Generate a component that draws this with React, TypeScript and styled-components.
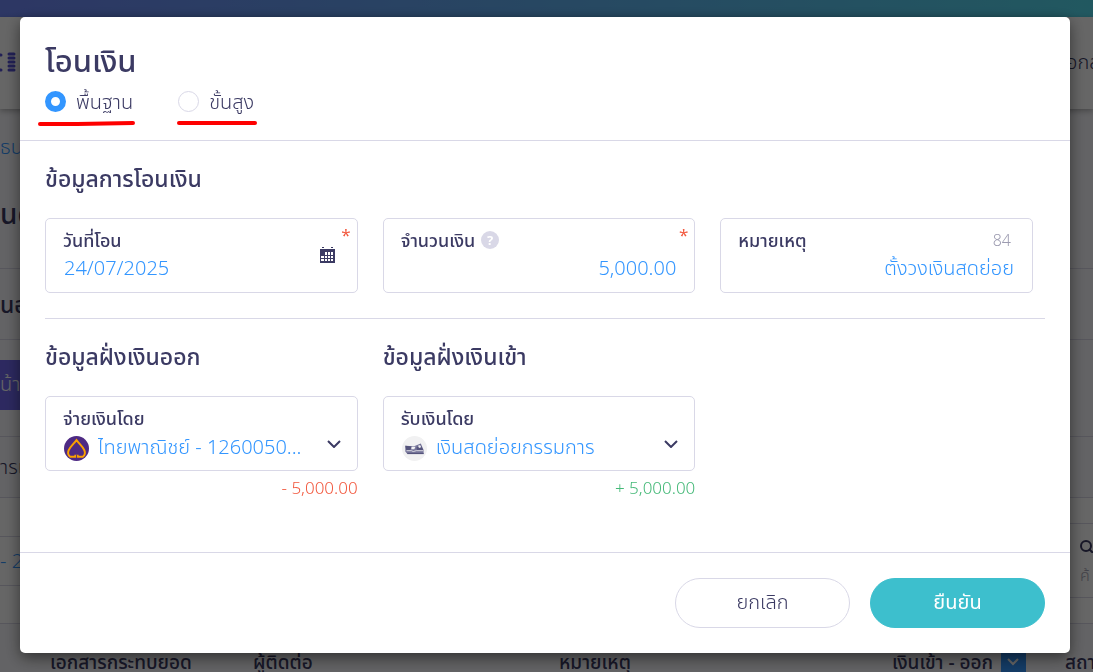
import React from 'react';
import styled, { createGlobalStyle } from 'styled-components';

const ink = '#3b3a63';
const blue = '#3396ff';
const line = '#d9d8e7';

const GlobalStyle = createGlobalStyle`
  * { box-sizing: border-box; }
  html, body { margin: 0; height: 100%; overflow: hidden; }
  body, button, input, select {
    font-family: 'Noto Sans', 'Noto Sans Thai', 'Noto Sans Thai Looped', 'Open Sans', sans-serif;
    color: ${ink};
  }
`;

/* Page behind the dialog */
const Page = styled.div`
  min-height: 100vh;
  background: #f8f8fc;
`;
const TopBar = styled.div`
  height: 17px;
  background: linear-gradient(90deg, #7189fb, #54dcf0);
`;
const Header = styled.header`
  position: relative;
  display: flex;
  align-items: center;
  justify-content: space-between;
  height: 92px;
  background: #fff;
  box-shadow: 0 2px 6px rgba(0, 0, 0, 0.3);
`;
const NavLink = styled.a`
  width: 27px;
  font-size: 20px;
  font-weight: 300;
  white-space: nowrap;
  color: ${ink};
  text-decoration: none;
`;
const Intro = styled.div`
  display: flex;
  flex-direction: column;
  gap: 27px;
  height: 160px;
  padding-top: 24px;
  border-bottom: 1px solid ${line};
`;
const Crumb = styled.a`
  font-size: 20px;
  font-weight: 300;
  line-height: 28px;
  color: ${blue};
  text-decoration: none;
`;
const PageTitle = styled.h2`
  margin: 0;
  font-size: 28px;
  font-weight: 500;
  line-height: 50px;
`;
const TabRow = styled.div`
  height: 71px;
  font-size: 23px;
  font-weight: 500;
  line-height: 70px;
  border-bottom: 1px solid ${line};
`;
const ActionRow = styled.div`
  height: 97px;
  padding-top: 20px;
  border-bottom: 1px solid ${line};
`;
const PageButton = styled.button`
  display: block;
  width: 140px;
  height: 50px;
  padding: 0;
  border: 0;
  background: #7068f0;
  color: #fff;
  font-size: 20px;
  font-weight: 300;
  text-align: left;
`;
const TabLabel = styled.div`
  height: 61px;
  font-size: 20px;
  font-weight: 300;
  line-height: 60px;
  border-bottom: 1px solid ${line};
`;
const Filters = styled.div`
  display: flex;
  align-items: center;
  justify-content: space-between;
  height: 126px;
  background: #fff;
  border-bottom: 1px solid ${line};
`;
const FilterBox = styled.div`
  width: 200px;
  height: 50px;
  font-size: 20px;
  font-weight: 300;
  line-height: 48px;
  color: ${blue};
  border: solid ${line};
  border-width: 1px 0;
`;
const SearchBox = styled.div`
  display: flex;
  flex-direction: column;
  gap: 10px;
  width: 28px;
  height: 75px;
  padding: 15px 0 0 15px;
  margin-left: auto;
  color: #a9a9b8;
  font-size: 16px;
  font-weight: 300;
  line-height: 24px;
  border: solid ${line};
  border-width: 1px 0;
`;
const HeadRow = styled.div`
  display: grid;
  grid-template-columns: 203px 306px 333px minmax(0, 1fr) 28px;
  padding: 19px 0 0 50px;
  font-size: 19px;
  font-weight: 500;
  line-height: 38px;
  white-space: nowrap;
  overflow: hidden;
`;
const SortCell = styled.div`
  display: flex;
  align-items: center;
  gap: 8px;
`;
const SortButton = styled.button`
  display: grid;
  place-items: center;
  width: 25px;
  height: 25px;
  padding: 0;
  border: 0;
  background: ${blue};
  color: #fff;
`;

/* Dialog */
const Overlay = styled.div`
  position: fixed;
  inset: 0;
  padding: 17px 23px 19px 20px;
  background: rgba(0, 0, 0, 0.6);
`;
const Dialog = styled.form`
  position: relative;
  background: #fff;
  border-radius: 5px;
  box-shadow: 0 5px 15px rgba(0, 0, 0, 0.5);
`;
const DialogHead = styled.div`
  height: 124px;
  padding: 20px 25px 0;
  border-bottom: 1px solid ${line};
`;
const Title = styled.h1`
  margin: 0;
  font-size: 31px;
  font-weight: 500;
  line-height: 47px;
`;
const Modes = styled.div`
  display: flex;
  gap: 45px;
`;
const Mode = styled.label`
  position: relative;
  display: flex;
  align-items: center;
  gap: 10px;
  height: 34px;
  font-size: 20px;
  font-weight: 300;
`;
const ModeText = styled.span`
  padding-top: 3px;
`;
const Radio = styled.input`
  appearance: none;
  width: 21px;
  height: 21px;
  margin: 0;
  border: 1px solid ${line};
  border-radius: 50%;
  &:checked { border: 6px solid ${blue}; }
`;
const Stroke = styled.svg`
  position: absolute;
  left: -8px;
  top: 36px;
  overflow: visible;
`;
const Body = styled.div`
  height: 411px;
  padding: 19px 25px 0;
`;
const Columns = styled.div`
  display: grid;
  grid-template-columns: repeat(3, minmax(0, 1fr));
  gap: 25px;
  margin-right: 12px;
`;
const Heading = styled.h2`
  margin: 0;
  font-size: 23px;
  font-weight: 500;
  line-height: 36px;
`;
const InfoGroup = styled.section`
  display: flex;
  flex-direction: column;
  gap: 22px;
  padding-bottom: 25px;
  border-bottom: 1px solid ${line};
`;
const SideGroup = styled.section`
  display: flex;
  flex-direction: column;
  padding-top: 19px;
`;
const Field = styled.div`
  position: relative;
  display: flex;
  flex-direction: column;
  height: 75px;
  padding: 9px 17px 0;
  border: 1px solid ${line};
  border-radius: 5px;
`;
const SideField = styled(Field)`
  margin-top: 22px;
`;
const LabelRow = styled.div`
  display: flex;
  align-items: center;
  gap: 6px;
  height: 24px;
`;
const Label = styled.label`
  font-size: 18px;
  font-weight: 500;
  line-height: 24px;
`;
const Help = styled.button`
  width: 18px;
  height: 18px;
  padding: 0;
  border: 0;
  border-radius: 50%;
  background: ${line};
  color: #fff;
  font-size: 13px;
  font-weight: 700;
  line-height: 18px;
`;
const Count = styled.span`
  margin-left: auto;
  padding-right: 4px;
  font-size: 16px;
  font-weight: 300;
  color: #9c9bb0;
`;
const Required = styled.span`
  position: absolute;
  top: 4px;
  right: 6px;
  font-size: 17px;
  line-height: 24px;
  color: #f2583e;
`;
const Value = styled.input<{ $end?: boolean }>`
  width: 100%;
  height: 32px;
  padding: 0 1px;
  border: 0;
  outline: 0;
  background: none;
  color: ${blue};
  font-size: 20px;
  font-weight: 300;
  line-height: 32px;
  text-align: ${(p) => (p.$end ? 'right' : 'left')};
`;
const CalendarButton = styled.button`
  position: absolute;
  right: 22px;
  top: 28px;
  padding: 0;
  border: 0;
  background: none;
  line-height: 0;
`;
const Picker = styled.div`
  position: relative;
  display: flex;
  align-items: center;
  gap: 9px;
  height: 32px;
  padding-left: 1px;
`;
const Logo = styled.svg`
  flex: none;
  margin-top: 4px;
`;
const Select = styled.select`
  appearance: none;
  flex: 1;
  min-width: 0;
  height: 32px;
  padding: 0 30px 0 0;
  border: 0;
  outline: 0;
  background: none;
  color: ${blue};
  font-size: 20px;
  font-weight: 300;
`;
const Chevron = styled.svg`
  position: absolute;
  right: -1px;
  top: 10px;
  pointer-events: none;
`;
const Delta = styled.output<{ $color: string }>`
  margin-top: 5px;
  color: ${(p) => p.$color};
  font-size: 17px;
  font-weight: 300;
  line-height: 24px;
  text-align: right;
`;
const Foot = styled.div`
  display: flex;
  justify-content: flex-end;
  gap: 20px;
  padding: 25px;
  border-top: 1px solid ${line};
`;
const Action = styled.button<{ $primary?: boolean }>`
  width: 175px;
  height: 50px;
  border: 1px solid ${(p) => (p.$primary ? '#3dbfcd' : line)};
  border-radius: 25px;
  background: ${(p) => (p.$primary ? '#3dbfcd' : '#fff')};
  color: ${(p) => (p.$primary ? '#fff' : ink)};
  font-size: 20px;
  font-weight: ${(p) => (p.$primary ? 400 : 300)};
`;

const CalendarIcon = () => (
  <svg width="15" height="16" viewBox="0 0 15 16">
    <path d="M2 0h2v1H2zM11 0h2v1h-2zM0 2h15v14H0z" fill={ink} />
    <g fill="#fff">
      {[5, 9, 12].map((y, r) =>
        [1, 5, 8, 11].map((x, c) =>
          r === 0 && c === 0 ? null : <rect key={`${x}-${y}`} x={x} y={y} width={x === 1 ? 3 : 2} height={r === 0 ? 3 : 2} />
        )
      )}
    </g>
  </svg>
);

const BankLogo = () => (
  <Logo width="25" height="25" viewBox="0 0 25 25">
    <circle cx="12.5" cy="12.5" r="12.5" fill="#4e2a84" />
    <path
      d="M11.4 18.8V20.8H6.2C4.2 19.4 3.6 17 4.6 14.4C6 10.7 9.5 8.2 12.5 4.2C15.5 8.2 19 10.7 20.4 14.4C21.4 17 20.8 19.4 18.8 20.8H13.6V18.8"
      fill="none"
      stroke="#fba100"
      strokeWidth="2"
    />
    <path d="M12.1 19h.8v3h-.8z" fill="#4e2a84" />
  </Logo>
);

const CashLogo = () => (
  <Logo width="25" height="25" viewBox="0 0 25 25">
    <circle cx="12.5" cy="12.5" r="12.5" fill="#f1f1f2" />
    <path d="M3.3 9.8L12 10.3L18.8 7.6L21.6 14V18H5.4L3.3 15.5z" fill="#76759a" />
    <path d="M3.3 9.8l6.5.6L8.3 14l-4 .3zM14.5 11.5l4-3 2.8 5.7H15z" fill="#55547c" />
    <path d="M9.5 10.8h4l-1.2 2.4h-3zM16 9.8l2.2-.8 1 2.2-2.2.8z" fill="#f1f1f2" />
    <path d="M4.5 14.7h4.8l2 .8 3-.8h7" fill="none" stroke="#f1f1f2" strokeWidth="0.8" />
    <path d="M5.4 17.5h16.2" stroke="#55547c" strokeWidth="1.2" />
  </Logo>
);

const Arrow = () => (
  <Chevron width="14" height="8" viewBox="0 0 14 8">
    <path d="M1 1l6 6 6-6" fill="none" stroke={ink} strokeWidth="2" />
  </Chevron>
);

export default function App() {
  return (
    <>
      <GlobalStyle />
      <Page>
        <TopBar />
        <Header>
          <svg width="20" height="22" viewBox="0 0 20 22">
            <path d="M0 3h1M0 18h1M9 2h5M9 6h5M9 10h5M9 14h5M9 18h5" stroke="#5651d6" strokeWidth="3" strokeLinecap="round" />
          </svg>
          <NavLink href="#">อกส</NavLink>
        </Header>
        <Intro>
          <Crumb href="#">ธนา</Crumb>
          <PageTitle>นด</PageTitle>
        </Intro>
        <TabRow>นอ</TabRow>
        <ActionRow><PageButton type="button">น้า</PageButton></ActionRow>
        <TabLabel>ารเ</TabLabel>
        <Filters>
          <FilterBox>- 2</FilterBox>
          <SearchBox>
            <svg width="13" height="14" viewBox="0 0 13 14" fill="none" stroke={ink} strokeWidth="2">
              <circle cx="6" cy="7" r="5" /><path d="M9 10l4 4" />
            </svg>
            ค้
          </SearchBox>
        </Filters>
        <HeadRow>
          <span>เอกสารกระทบยอด</span>
          <span>ผู้ติดต่อ</span>
          <span>หมายเหตุ</span>
          <SortCell>
            เงินเข้า - ออก
            <SortButton type="button" aria-label="เงินเข้า - ออก">
              <svg width="13" height="8" viewBox="0 0 13 8"><path d="M1 1l5 5 5-5" fill="none" stroke="#fff" strokeWidth="2" /></svg>
            </SortButton>
          </SortCell>
          <span>สถา</span>
        </HeadRow>
      </Page>

      <Overlay>
        <Dialog role="dialog" aria-labelledby="title" onSubmit={(e) => e.preventDefault()}>
          <DialogHead>
            <Title id="title">โอนเงิน</Title>
            <Modes>
              <Mode>
                <Radio type="radio" name="mode" defaultChecked />
                <ModeText>พื้นฐาน</ModeText>
                <Stroke width="98" height="6"><path d="M3 4L40 4L96 3" stroke="#fe0000" strokeWidth="4" strokeLinecap="round" fill="none" /></Stroke>
              </Mode>
              <Mode>
                <Radio type="radio" name="mode" />
                <ModeText>ขั้นสูง</ModeText>
                <Stroke width="90" height="6"><path d="M9 3H85" stroke="#fe0000" strokeWidth="4" strokeLinecap="round" /></Stroke>
              </Mode>
            </Modes>
          </DialogHead>
          <Body>
            <InfoGroup>
              <Heading>ข้อมูลการโอนเงิน</Heading>
              <Columns>
                <Field>
                  <LabelRow><Label htmlFor="date">วันที่โอน</Label></LabelRow>
                  <Value id="date" defaultValue="24/07/2025" />
                  <CalendarButton type="button" aria-label="วันที่โอน"><CalendarIcon /></CalendarButton>
                  <Required>*</Required>
                </Field>
                <Field>
                  <LabelRow>
                    <Label htmlFor="amount">จำนวนเงิน</Label>
                    <Help type="button">?</Help>
                  </LabelRow>
                  <Value id="amount" defaultValue="5,000.00" $end />
                  <Required>*</Required>
                </Field>
                <Field>
                  <LabelRow>
                    <Label htmlFor="note">หมายเหตุ</Label>
                    <Count>84</Count>
                  </LabelRow>
                  <Value id="note" defaultValue="ตั้งวงเงินสดย่อย" $end />
                </Field>
              </Columns>
            </InfoGroup>
            <Columns>
              <SideGroup>
                <Heading>ข้อมูลฝั่งเงินออก</Heading>
                <SideField>
                  <LabelRow><Label htmlFor="from">จ่ายเงินโดย</Label></LabelRow>
                  <Picker>
                    <BankLogo />
                    <Select id="from"><option>ไทยพาณิชย์ - 1260050...</option></Select>
                    <Arrow />
                  </Picker>
                </SideField>
                <Delta $color="#f2583e">- 5,000.00</Delta>
              </SideGroup>
              <SideGroup>
                <Heading>ข้อมูลฝั่งเงินเข้า</Heading>
                <SideField>
                  <LabelRow><Label htmlFor="to">รับเงินโดย</Label></LabelRow>
                  <Picker>
                    <CashLogo />
                    <Select id="to"><option>เงินสดย่อยกรรมการ</option></Select>
                    <Arrow />
                  </Picker>
                </SideField>
                <Delta $color="#45b978">+ 5,000.00</Delta>
              </SideGroup>
            </Columns>
          </Body>
          <Foot>
            <Action type="button">ยกเลิก</Action>
            <Action type="submit" $primary>ยืนยัน</Action>
          </Foot>
        </Dialog>
      </Overlay>
    </>
  );
}
